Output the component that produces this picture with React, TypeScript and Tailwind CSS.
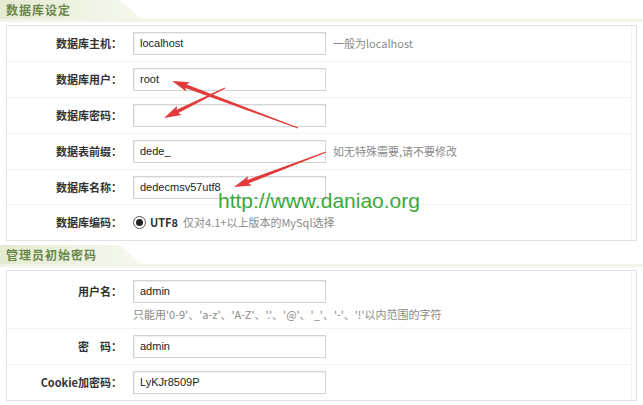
import React from "react";

const cjk = "font-['Noto_Sans_CJK_SC',sans-serif]";
const latin = "font-['Liberation_Sans','Noto_Sans_CJK_SC',sans-serif]";

type Pt = [number, number];

function arrowPoints(tail: Pt, tip: Pt, headLen = 14, headHalf = 5, tailW = 0.6, neckW = 1.8) {
  const dx = tip[0] - tail[0];
  const dy = tip[1] - tail[1];
  const len = Math.hypot(dx, dy);
  const ux = dx / len;
  const uy = dy / len;
  const nx = -uy;
  const ny = ux;
  const bx = tip[0] - ux * headLen;
  const by = tip[1] - uy * headLen;
  const pts: Pt[] = [
    [tail[0] + nx * tailW, tail[1] + ny * tailW],
    [bx + nx * neckW, by + ny * neckW],
    [bx + nx * headHalf - ux * 2, by + ny * headHalf - uy * 2],
    tip,
    [bx - nx * headHalf - ux * 2, by - ny * headHalf - uy * 2],
    [bx - nx * neckW, by - ny * neckW],
    [tail[0] - nx * tailW, tail[1] - ny * tailW],
  ];
  return pts.map((p) => `${p[0].toFixed(1)},${p[1].toFixed(1)}`).join(" ");
}

function SectionHeader({ title }: { title: string }) {
  return (
    <div className="h-[22px] border-b-[3px] border-[#f2f4e8] flex">
      <div className="w-[142px] h-full bg-gradient-to-r from-[#e4ebd2] via-[#edf2e1] to-[#f6f8ef] [clip-path:polygon(0_0,84%_0,100%_100%,0_100%)] flex items-center pl-[6px]">
        <span className={`${cjk} text-[12px] font-bold text-[#6b8649] tracking-[1px]`}>{title}</span>
      </div>
    </div>
  );
}

function Label({ children }: { children: React.ReactNode }) {
  return <div className={`w-[115px] text-right ${cjk} text-[11px] font-bold text-[#333]`}>{children}</div>;
}

function Input({ value }: { value: string }) {
  return (
    <div className="ml-[11px] w-[193px] h-[23px] border border-[#d4d4d4] bg-white flex items-center pl-[6px] shadow-[inset_1px_1px_1px_#eee]">
      <span className={`${latin} text-[11px] text-[#222]`}>{value}</span>
    </div>
  );
}

function Row({
  label,
  value,
  help,
  h = "h-[36px]",
  last = false,
}: {
  label: string;
  value: string;
  help?: string;
  h?: string;
  last?: boolean;
}) {
  return (
    <div className={`${h} flex items-center mr-[4px] ${last ? "" : "border-b border-[#f3f3f3]"} border-r border-r-[#f3f3f3]`}>
      <Label>{label}</Label>
      <Input value={value} />
      {help && <span className={`ml-[7px] ${cjk} text-[11px] text-[#8a8a8a]`}>{help}</span>}
    </div>
  );
}

export default function App() {
  return (
    <div className="relative w-[643px] h-[405px] bg-white overflow-hidden">
      <SectionHeader title="数据库设定" />

      <div className="mx-[6px] mt-[3px] border border-[#e2e2e2]">
        <Row label="数据库主机：" value="localhost" help="一般为localhost" />
        <Row label="数据库用户：" value="root" />
        <Row label="数据库密码：" value="" />
        <Row label="数据表前缀：" value="dede_" help="如无特殊需要,请不要修改" />
        <Row label="数据库名称：" value="dedecmsv57utf8" h="h-[35px]" />
        <div className="h-[35px] flex items-center mr-[4px] border-r border-[#f3f3f3]">
          <Label>数据库编码：</Label>
          <div className="ml-[11px] flex items-center">
            <span className="w-[13px] h-[13px] rounded-full border border-[#555] bg-white flex items-center justify-center">
              <span className="w-[7px] h-[7px] rounded-full bg-[#222]" />
            </span>
            <span className={`ml-[4px] ${cjk} text-[11px] font-bold text-[#333]`}>UTF8</span>
            <span className={`ml-[5px] ${cjk} text-[11px] text-[#8a8a8a]`}>仅对4.1+以上版本的MySql选择</span>
          </div>
        </div>
      </div>

      <div className="mt-[4px]">
        <SectionHeader title="管理员初始密码" />
      </div>

      <div className="mx-[6px] mt-[3px] border border-[#e2e2e2]">
        <div className="h-[58px] flex flex-col justify-start pt-[9px] mr-[4px] border-b border-[#f3f3f3] border-r border-r-[#f3f3f3]">
          <div className="flex items-center">
            <Label>用户名：</Label>
            <Input value="admin" />
          </div>
          <div className={`ml-[126px] mt-[3px] ${cjk} text-[11px] text-[#8a8a8a]`}>
            只能用'0-9'、'a-z'、'A-Z'、'.'、'@'、'_'、'-'、'!'以内范围的字符
          </div>
        </div>
        <Row label="密　码：" value="admin" />
        <Row label="Cookie加密码：" value="LyKJr8509P" h="h-[35px]" last />
      </div>

      {/* watermark */}
      <div className={`absolute left-[218px] top-[190px] ${latin} text-[21px] leading-[21px] text-[#3aa93a]`}>
        http://www.daniao.org
      </div>

      {/* red annotation arrows */}
      <svg className="absolute inset-0 pointer-events-none" width="643" height="405">
        <polygon points={arrowPoints([298, 128], [172, 81], 15, 5, 0.6, 1.8)} fill="#e23b3b" />
        <polygon points={arrowPoints([225, 88], [164, 118], 15, 5, 0.6, 1.8)} fill="#e23b3b" />
        <polygon points={arrowPoints([326, 152], [234, 187], 15, 5, 0.6, 1.8)} fill="#e23b3b" />
      </svg>
    </div>
  );
}
